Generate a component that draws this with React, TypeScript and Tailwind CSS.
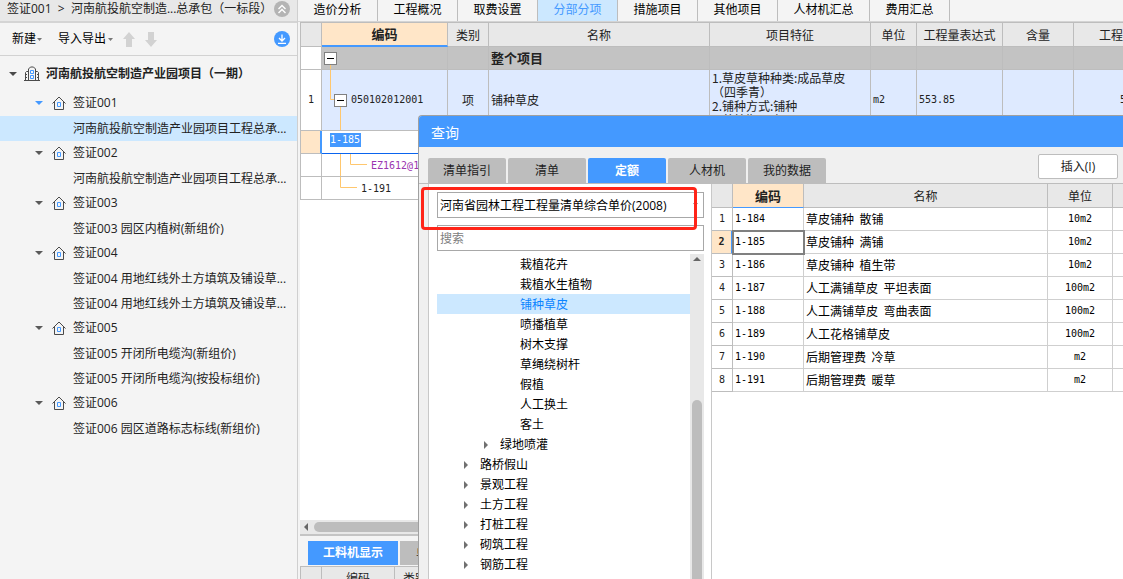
import React, { useState } from "react";

const UI = "font-['Open_Sans','Noto_Sans_CJK_SC',sans-serif]";
const SHEET = "font-['Noto_Sans_CJK_SC',sans-serif]";
const CODE = "font-['DejaVu_Sans_Mono','Noto_Sans_CJK_SC',monospace] text-[10px]";

function Caret({ className = "" }: { className?: string }) {
  return (
    <svg viewBox="0 0 8 4" className={`h-1 w-2 shrink-0 ${className}`} fill="currentColor" aria-hidden="true">
      <path d="M0 0h8L4 4z" />
    </svg>
  );
}

function SmallCaret() {
  return (
    <svg viewBox="0 0 5 3" className="h-[3px] w-[5px] text-[#777]" fill="currentColor" aria-hidden="true">
      <path d="M0 0h5L2.5 3z" />
    </svg>
  );
}

function RightCaret() {
  return (
    <svg viewBox="0 0 4 8" className="h-2 w-1 shrink-0 text-[#707070]" fill="currentColor" aria-hidden="true">
      <path d="M0 0l4 4-4 4z" />
    </svg>
  );
}

function HouseIcon() {
  return (
    <svg viewBox="0 0 14 14" className="h-[14px] w-[14px] shrink-0" fill="none" aria-hidden="true">
      <path d="M.5 7.5 7 1l6.500 6.500M2.500 6v7.500h9V6" stroke="#4a4a4a" />
      <path d="M5.500 6.500h3v4h-3z" stroke="#4499ff" />
    </svg>
  );
}

function BuildingIcon() {
  return (
    <svg viewBox="0 0 16 16" className="h-4 w-4 shrink-0" fill="none" aria-hidden="true">
      <path
        d="M4.500 14.500V3L6.500 1h3l2 2v11.500M4.500 5.500h-2l-1 1v8M11.500 5.500h2l1 1v8M0 14.500h16M2 8.500h1M2 11.500h1M13 8.500h1M13 11.500h1"
        stroke="#4a4a4a"
      />
      <path d="M6.500 4.500h3v3h-3zM6.500 9.500h3v3h-3z" stroke="#4499ff" />
    </svg>
  );
}

function BigArrow({ down = false }: { down?: boolean }) {
  return (
    <svg viewBox="0 0 12 15" className={`h-[15px] w-3 ${down ? "rotate-180" : ""}`} fill="#d2d2d2" aria-hidden="true">
      <path d="M6 0l6 7H9v8H3V7H0z" />
    </svg>
  );
}

const tree = [
  { name: "签证001", active: true, items: ["河南航投航空制造产业园项目工程总承..."] },
  { name: "签证002", items: ["河南航投航空制造产业园项目工程总承..."] },
  { name: "签证003", items: ["签证003 园区内植树(新组价)"] },
  { name: "签证004", items: ["签证004 用地红线外土方填筑及铺设草...", "签证004 用地红线外土方填筑及铺设草..."] },
  { name: "签证005", items: ["签证005 开闭所电缆沟(新组价)", "签证005 开闭所电缆沟(按投标组价)"] },
  { name: "签证006", items: ["签证006 园区道路标志标线(新组价)"] },
];

function Sidebar() {
  return (
    <aside className="flex w-[298px] shrink-0 flex-col border-r border-[#cfcfcf] bg-[#f4f4f4] text-xs text-[#222]">
      <div className="flex h-[23px] shrink-0 items-center justify-between border-b-2 border-[#d4d4d4] bg-[#e8e8e8] pb-1 pl-[7px] pr-[7px]">
        <span className="whitespace-nowrap">签证001&nbsp; &gt; &nbsp;河南航投航空制造...总承包（一标段）</span>
        <button aria-label="收起" className="flex size-4 shrink-0 items-center justify-center rounded-full bg-[#b4b4b4]">
          <svg viewBox="0 0 10 10" className="size-[10px]" fill="none" stroke="#fff" strokeWidth="1.400" aria-hidden="true">
            <path d="M1.500 5 5 1.500 8.500 5M1.500 9 5 5.500 8.500 9" />
          </svg>
        </button>
      </div>
      <div className="flex h-[33px] shrink-0 items-center border-b border-[#d2d2d2] pl-3 pr-[7px] text-black">
        <button className="flex items-center gap-px">新建<SmallCaret /></button>
        <button className="ml-4 flex items-center gap-[2px]">导入导出<SmallCaret /></button>
        <button aria-label="上移" className="ml-[10px]"><BigArrow /></button>
        <button aria-label="下移" className="ml-[10px]"><BigArrow down /></button>
        <button aria-label="下载" className="ml-auto flex size-4 items-center justify-center rounded-full bg-[#4499ff]">
          <svg viewBox="0 0 10 10" className="size-[10px]" fill="none" stroke="#fff" strokeWidth="1.300" aria-hidden="true">
            <path d="M5 .5v6M2 4l3 3 3-3M1 9.300h8" />
          </svg>
        </button>
      </div>
      <nav className="flex flex-col">
        <div className="flex h-[35px] items-center pl-[9px] font-bold">
          <Caret className="text-[#4a4a4a]" />
          <span className="ml-[7px] mr-[6px]"><BuildingIcon /></span>
          河南航投航空制造产业园项目（一期）
        </div>
        {tree.map((group) => (
          <div key={group.name}>
            <div className="flex h-[25px] items-center pb-px pl-[35px]">
              <Caret className={group.active ? "text-[#4499ff]" : "text-[#5a5a5a]"} />
              <span className="ml-[9px] mr-[7px]"><HouseIcon /></span>
              {group.name}
            </div>
            {group.items.map((item, i) => (
              <a
                key={i}
                href="#"
                className={`block h-[25px] whitespace-nowrap pl-[73px] leading-[25px] ${group.active ? "bg-[#cce8ff]" : ""}`}
              >
                {item}
              </a>
            ))}
          </div>
        ))}
      </nav>
    </aside>
  );
}

const mainTabs = ["造价分析", "工程概况", "取费设置", "分部分项", "措施项目", "其他项目", "人材机汇总", "费用汇总"];

function MinusButton() {
  return (
    <button aria-label="折叠" className="relative flex size-[13px] shrink-0 items-center justify-center border border-[#808080] bg-white">
      <span className="h-px w-[7px] bg-black" />
    </button>
  );
}

function Lines({ d }: { d: string }) {
  return (
    <svg className="pointer-events-none absolute left-0 top-0 h-full w-full" fill="none" stroke="#ffc76e" aria-hidden="true">
      <path d={d} />
    </svg>
  );
}

const cell = "border-b border-r border-[#bdbdbd] p-0";

function MainSheet() {
  const [code, setCode] = useState("1-185");
  return (
    <table className={`w-[860px] table-fixed border-separate border-spacing-0 border-l border-[#bdbdbd] text-xs leading-[14px] text-[#222] ${SHEET}`}>
      <colgroup>
        <col className="w-[21px]" />
        <col className="w-[126px]" />
        <col className="w-[41px]" />
        <col className="w-[221px]" />
        <col className="w-[161px]" />
        <col className="w-[46px]" />
        <col className="w-[86px]" />
        <col className="w-[71px]" />
        <col className="w-[87px]" />
      </colgroup>
      <thead>
        <tr className="h-6 bg-[#e8e8e8]">
          <th className={cell} />
          <th className="border-b-2 border-r border-b-[#4499ff] border-r-[#bdbdbd] bg-[#ffe6c8] p-0 text-[13px] font-bold">编码</th>
          {["类别", "名称", "项目特征", "单位", "工程量表达式", "含量", "工程量"].map((h) => (
            <th key={h} className={`${cell} font-normal`}>{h}</th>
          ))}
        </tr>
      </thead>
      <tbody>
        <tr className="h-[23px] bg-[#c3c3c3]">
          <td className={`${cell} bg-white`} />
          <td className={`${cell} relative`}>
            <Lines d="M8.500 17v6" />
            <div className="pl-[2px]"><MinusButton /></div>
          </td>
          <td className={cell} />
          <td className={`${cell} pl-[2px] text-[13px] font-bold`}>整个项目</td>
          <td className={cell} />
          <td className={cell} />
          <td className={cell} />
          <td className={cell} />
          <td className={cell} />
        </tr>
        <tr className="h-[61px] bg-[#deeaff]">
          <td className={`${cell} bg-white text-center ${CODE}`}>1</td>
          <td className={`${cell} relative`}>
            <Lines d="M8.500 0v29.500h4M18.500 36v25" />
            <div className={`flex items-center gap-1 pl-3 ${CODE}`}><MinusButton />050102012001</div>
          </td>
          <td className={`${cell} text-center`}>项</td>
          <td className={`${cell} pl-[2px]`}>铺种草皮</td>
          <td className={cell}>
            <div className="h-[60px] overflow-hidden whitespace-pre pl-[2px] pt-px">{"1.草皮草种种类:成品草皮\n（四季青）\n2.铺种方式:铺种\n3.养护期:一年"}</div>
          </td>
          <td className={`${cell} pl-[2px] ${CODE}`}>m2</td>
          <td className={`${cell} pl-[2px] ${CODE}`}>553.85</td>
          <td className={cell} />
          <td className={`${cell} pr-1 text-right ${CODE}`}>553.85</td>
        </tr>
        <tr className="h-[23px]">
          <td className="border-b border-r-2 border-b-[#bdbdbd] border-r-[#4499ff] bg-[#ffe6c8] p-0" />
          <td className="border-b border-r border-[#0a64ee] p-0 align-top" colSpan={8}>
            <input
              aria-label="编码"
              value={code}
              onChange={(e) => setCode(e.target.value)}
              className={`ml-2 mt-[2px] block h-[14px] w-[31px] bg-[#4499ff] text-white ${CODE}`}
            />
          </td>
        </tr>
        <tr className="h-[23px]">
          <td className={cell} />
          <td className={`${cell} relative`} colSpan={8}>
            <Lines d="M18.500 0v23M28.500 0v10.500h16.500" />
            <span className={`pl-[49px] text-[#9b35b0] ${CODE}`}>EZ1612@1</span>
          </td>
        </tr>
        <tr className="h-[23px]">
          <td className={cell} />
          <td className={`${cell} relative`} colSpan={8}>
            <Lines d="M18.500 0v10.500h16.500" />
            <span className={`pl-[39px] ${CODE}`}>1-191</span>
          </td>
        </tr>
      </tbody>
    </table>
  );
}

function BottomPanel() {
  return (
    <div className="shrink-0">
      <div className="flex h-[14px] items-center gap-[6px] bg-[#e8e8e8] pl-1">
        <svg viewBox="0 0 4 8" className="h-2 w-1" fill="#666" aria-hidden="true"><path d="M4 0v8L0 4z" /></svg>
        <div className="h-[10px] flex-1 rounded-full bg-[#bdbdbd]" />
      </div>
      <div className="flex h-8 items-end gap-[2px] border-t-2 border-[#c4c4c4] bg-[#f4f4f4] pb-px pl-2 text-xs">
        <button className="h-6 w-[90px] bg-[#4499ff] font-bold text-white">工料机显示</button>
        <button className="h-6 w-20 bg-[#bdbdbd] text-[#222]">单价构成</button>
      </div>
      <table className={`w-[860px] table-fixed border-separate border-spacing-0 border-l border-t border-[#bdbdbd] bg-[#e8e8e8] text-xs leading-[14px] text-[#222] ${SHEET}`}>
        <colgroup>
          <col className="w-[21px]" />
          <col className="w-[73px]" />
          <col className="w-[41px]" />
          <col />
        </colgroup>
        <thead>
          <tr className="h-[23px]">
            <th className={cell} />
            <th className={`${cell} font-normal`}>编码</th>
            <th className={`${cell} font-normal`}>类别</th>
            <th className={`${cell} font-normal`}>名称</th>
          </tr>
        </thead>
      </table>
    </div>
  );
}

const catalog: { name: string; level: number }[] = [
  ...["栽植花卉", "栽植水生植物", "铺种草皮", "喷播植草", "树木支撑", "草绳绕树杆", "假植", "人工换土", "客土"].map((name) => ({ name, level: 2 })),
  { name: "绿地喷灌", level: 1 },
  ...["路桥假山", "景观工程", "土方工程", "打桩工程", "砌筑工程", "钢筋工程"].map((name) => ({ name, level: 0 })),
];

const quotas = [
  ["1-184", "草皮铺种  散铺", "10m2"],
  ["1-185", "草皮铺种  满铺", "10m2"],
  ["1-186", "草皮铺种  植生带", "10m2"],
  ["1-187", "人工满铺草皮  平坦表面", "100m2"],
  ["1-188", "人工满铺草皮  弯曲表面", "100m2"],
  ["1-189", "人工花格铺草皮", "100m2"],
  ["1-190", "后期管理费  冷草", "m2"],
  ["1-191", "后期管理费  暖草", "m2"],
];

function CatalogPane() {
  return (
    <div className="flex w-[284px] shrink-0 flex-col border-x border-[#c8c8c8] bg-white pl-2 pr-[7px] pt-2 text-xs text-black">
      <div className="relative">
        <select
          aria-label="定额库"
          className="h-[26px] w-full appearance-none border border-[#a8a8a8] bg-white pl-[2px] pt-px outline-none"
        >
          <option>河南省园林工程工程量清单综合单价(2008)</option>
        </select>
        <span className="pointer-events-none absolute right-[6px] top-[11px]"><SmallCaret /></span>
        <div className="pointer-events-none absolute -bottom-3 -left-4 -top-[5px] right-[7px] rounded-[4px] border-3 border-[#ff2418]" />
      </div>
      <input
        aria-label="搜索"
        placeholder="搜索"
        className="mt-[7px] h-[26px] w-full shrink-0 border border-[#a8a8a8] pl-[2px] outline-none placeholder:text-[#808080]"
      />
      <div className="mt-[3px] flex min-h-0 flex-1">
        <ul className="min-w-0 flex-1 overflow-hidden">
          {catalog.map(({ name, level }) => (
            <li
              key={name}
              className={`flex h-5 items-center pt-[2px] ${level === 2 ? "pl-[83px]" : level === 1 ? "gap-3 pl-[47px]" : "gap-3 pl-[27px]"} ${
                name === "铺种草皮" ? "bg-[#cce8ff] text-[#0a84ff]" : ""
              }`}
            >
              {level < 2 && <RightCaret />}
              {name}
            </li>
          ))}
        </ul>
        <div className="flex w-[14px] flex-col items-center bg-[#e8e8e8] pt-[3px]">
          <svg viewBox="0 0 8 4" className="h-1 w-2 shrink-0" fill="#666" aria-hidden="true"><path d="M0 4h8L4 0z" /></svg>
          <div className="mt-[139px] w-[10px] flex-1 rounded-t-full bg-[#bdbdbd]" />
        </div>
      </div>
    </div>
  );
}

function QuotaTable() {
  const light = "border-b border-r border-[#cfcfcf] p-0";
  return (
    <div className="min-w-0 flex-1 bg-white">
      <table className={`w-full table-fixed border-separate border-spacing-0 text-xs leading-[14px] text-black ${SHEET}`}>
        <colgroup>
          <col className="w-[21px]" />
          <col className="w-[71px]" />
          <col />
          <col className="w-[65px]" />
          <col className="w-[10px]" />
        </colgroup>
        <thead>
          <tr className="h-6 bg-[#e8e8e8] text-[#222]">
            <th className={cell} />
            <th className="border-b border-r border-b-[#4499ff] border-r-[#bdbdbd] bg-[#ffe6c8] p-0 text-[13px] font-bold">编码</th>
            <th className={`${cell} font-normal`}>名称</th>
            <th className={`${cell} font-normal`}>单位</th>
            <th className="border-b border-[#bdbdbd] p-0" />
          </tr>
        </thead>
        <tbody>
          {quotas.map(([code, name, unit], i) => (
            <tr key={code} className="h-[23px]">
              {i === 1 ? (
                <td className={`border-b border-r-2 border-b-[#bdbdbd] border-r-[#4499ff] bg-[#ffe6c8] p-0 text-center font-bold text-[#222] ${CODE}`}>2</td>
              ) : (
                <td className={`${cell} text-center text-[#222] ${CODE}`}>{i + 1}</td>
              )}
              <td className={`${light} pl-[2px] ${CODE} ${i === 1 ? "outline-2 -outline-offset-1 outline-[#808080]" : ""}`}>{code}</td>
              <td className={`${light} whitespace-pre pl-[2px]`}>{name}</td>
              <td className={`${light} text-center ${CODE}`}>{unit}</td>
              <td className="border-b border-[#cfcfcf] p-0" />
            </tr>
          ))}
        </tbody>
      </table>
    </div>
  );
}

function QueryDialog() {
  const tabs = ["清单指引", "清单", "定额", "人材机", "我的数据"];
  return (
    <section
      role="dialog"
      aria-label="查询"
      className="absolute bottom-0 left-[118px] right-0 top-[115px] flex flex-col overflow-hidden rounded-tl-[4px] border-l border-t border-[#a0a0a0] bg-[#f0f0f0]"
    >
      <h2 className="flex h-[31px] shrink-0 items-center bg-[#4499ff] pb-px pl-3 pt-1 text-sm text-white">查询</h2>
      <div className="flex h-[37px] shrink-0 items-end gap-[2px] border-b border-[#bdbdbd] pl-[9px] pr-[5px] text-xs text-[#222]">
        {tabs.map((t) => (
          <button
            key={t}
            className={`h-[25px] w-[78px] rounded-t-[2px] ${t === "定额" ? "bg-[#4499ff] font-bold text-white" : "bg-[#bdbdbd]"}`}
          >
            {t}
          </button>
        ))}
        <button className="mb-1 ml-auto h-[25px] w-20 rounded-[2px] border border-[#bdbdbd] bg-white">插入(I)</button>
      </div>
      <div className="flex min-h-0 flex-1 pl-[9px]">
        <CatalogPane />
        <QuotaTable />
      </div>
    </section>
  );
}

export default function App() {
  return (
    <div className={`flex h-screen overflow-hidden bg-[#f4f4f4] ${UI}`}>
      <Sidebar />
      <main className="relative flex min-w-0 flex-1 flex-col">
        <nav className="flex h-[22px] shrink-0 border-b border-[#d4d4d4] text-xs text-black">
          {mainTabs.map((t) => (
            <button
              key={t}
              className={`h-[21px] border-r border-[#bdbdbd] pb-[2px] ${t === "人材机汇总" ? "w-[92px]" : "w-20"} ${
                t === "分部分项" ? "bg-[#cce8ff] text-[#4499ff]" : ""
              }`}
            >
              {t}
            </button>
          ))}
        </nav>
        <div className="flex min-h-0 flex-1 flex-col pl-[2px]">
          <div className="min-h-0 flex-1 overflow-hidden border-t border-[#bdbdbd] bg-white">
            <MainSheet />
          </div>
          <div className="h-[59px] shrink-0 overflow-hidden">
            <BottomPanel />
          </div>
        </div>
        <div className="pointer-events-none absolute inset-y-0 left-[2px] right-0">
          <div className="pointer-events-auto">
            <QueryDialog />
          </div>
        </div>
      </main>
    </div>
  );
}
